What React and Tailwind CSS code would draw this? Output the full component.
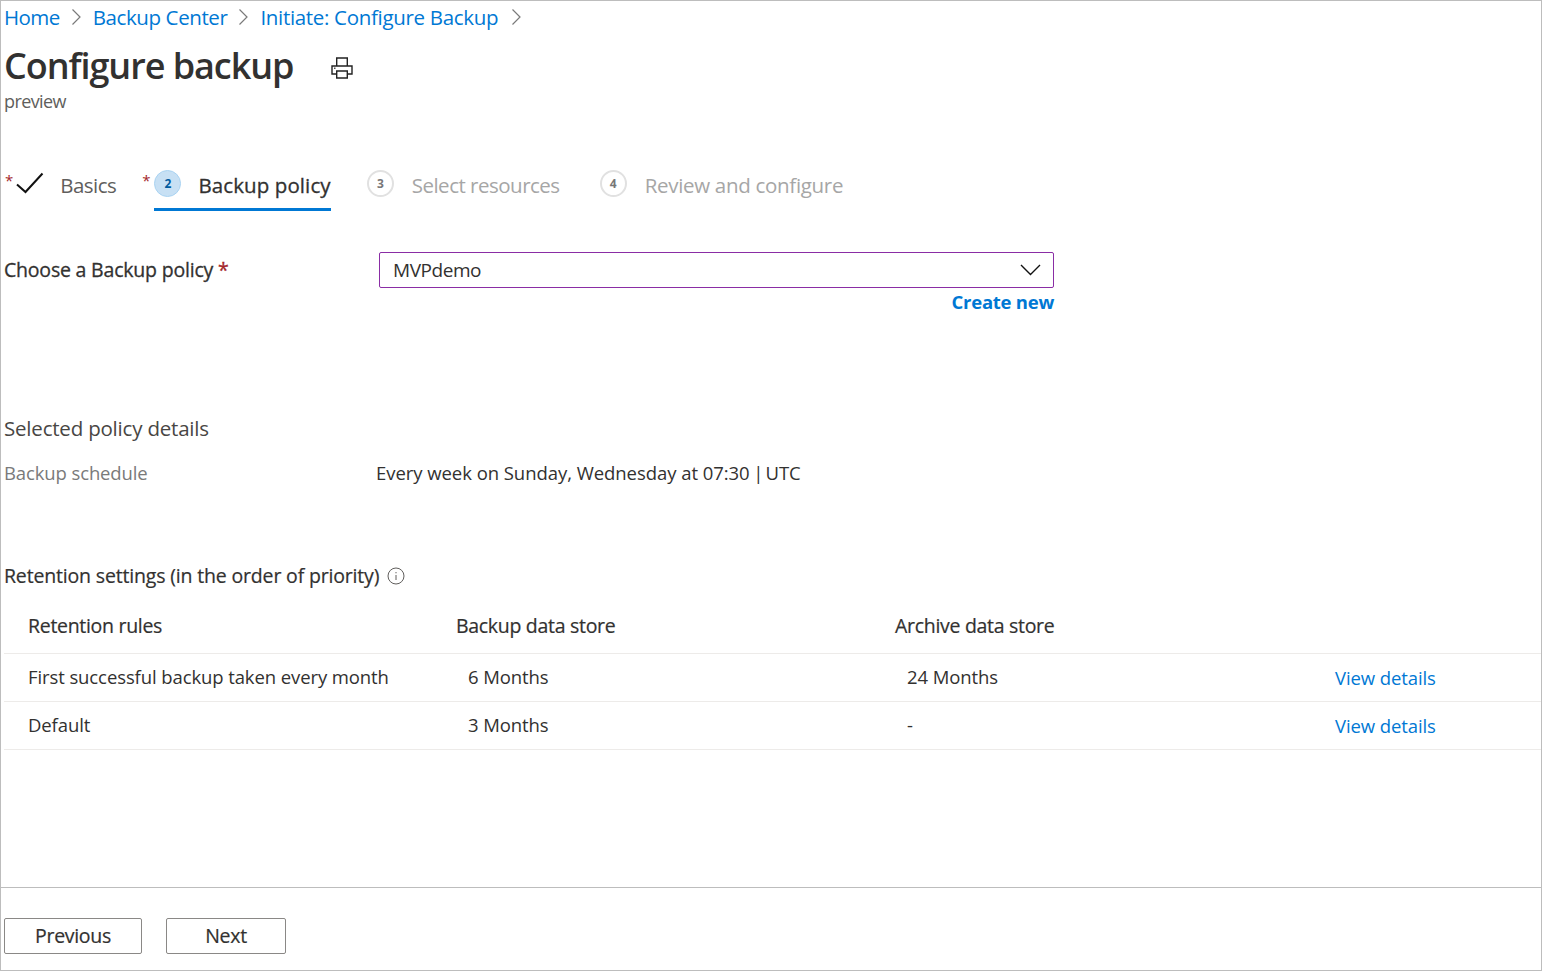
import { Fragment } from 'react';

const FONT = "font-['Open_Sans','Noto_Sans',sans-serif]";

const Chevron = () => (
  <svg width="10" height="18" viewBox="0 0 10 18" fill="none" stroke="#7a7a7a" strokeWidth="1.2">
    <path d="M1.5 1.5 9 9l-7.5 7.5" />
  </svg>
);

const crumbs = [
  { label: 'Home', className: 'tracking-[-0.55px]' },
  { label: 'Backup Center', className: 'tracking-[-0.4px]' },
  { label: 'Initiate: Configure Backup', className: 'tracking-[-0.32px] mr-[2px]' },
];

const rows = [
  { rule: 'First successful backup taken every month', backup: '6 Months', archive: '24 Months' },
  { rule: 'Default', backup: '3 Months', archive: '-' },
];

const Star = ({ className = '' }) => (
  <span className={`text-[#a4262c] text-[15px] leading-none ${className}`}>*</span>
);

const Step = ({ n, label, className }) => (
  <div className={`flex items-start ${className}`}>
    <div className="w-[27px] h-[27px] rounded-full border-2 border-[#e1e1e1] flex items-center justify-center text-[12px] font-bold text-[#777] mt-[1px]">
      {n}
    </div>
    <div className="ml-[18px] text-[20.5px] leading-[30px] text-[#a6a6a6] mt-[1px]">{label}</div>
  </div>
);

const App = () => {
  return (
    <div className={`${FONT} w-[1542px] h-[971px] bg-white border border-[#bdbdbd] flex flex-col overflow-hidden text-[#323130]`}>
      <div className="h-[33px] pl-[3px] flex items-center gap-[11px] text-[20.5px] text-[#0078d4]">
        {crumbs.map((c) => (
          <Fragment key={c.label}>
            <span className={c.className}>{c.label}</span>
            <span className="mr-[1px] -mt-[2px]"><Chevron /></span>
          </Fragment>
        ))}
      </div>

      <div className="h-[53px] pl-[3px] pt-[14px] flex items-start">
        <h1 className="text-[36px] font-semibold tracking-[-1.05px] leading-[36px]">Configure backup</h1>
        <svg className="ml-[38px] mt-[9px]" width="22" height="22" viewBox="0 0 22 22" fill="none" stroke="#222" strokeWidth="1.4">
          <path d="M5.7 9V1h10.6v8M5.7 17H1v-8h20v8h-4.7" />
          <path d="M5.7 14h10.6v7H5.7z" />
          <path d="M3.2 11.3h1.2" />
        </svg>
      </div>

      <div className="h-[32px] pl-[3px] text-[18px] tracking-[-0.6px] leading-[28px] text-[#605e5c]">preview</div>

      <div className="h-[68px] mt-[34px] pl-[4px] flex items-start pt-[16px]">
        <Star className="mt-[4px]" />
        <svg className="mt-[3px] ml-[3px]" width="28" height="22" viewBox="0 0 28 22" fill="none" stroke="#111" strokeWidth="2">
          <path d="M1 12.5 9.5 20 26.5 1.5" />
        </svg>
        <div className="ml-[16px] text-[20.5px] leading-[30px] tracking-[-0.55px] text-[#605e5c] mt-[1px]">Basics</div>
        <Star className="ml-[26px] mt-[4px]" />
        <div className="ml-[4px] h-[42px] flex items-start border-b-[3px] border-[#0078d4]">
          <div className="w-[27px] h-[27px] rounded-full bg-[#c7e0f4] border border-[#a9d3f2] flex items-center justify-center text-[12px] font-bold text-[#005a9e] mt-[1px]">
            2
          </div>
          <div className="ml-[17px] text-[20.5px] leading-[30px] tracking-[0.1px] [-webkit-text-stroke:0.3px] text-[#323130] mt-[1px]">Backup policy</div>
        </div>
        <Step n="3" label="Select resources" className="ml-[36px] tracking-[-0.5px]" />
        <Step n="4" label="Review and configure" className="ml-[40px] tracking-[-0.3px]" />
      </div>

      <div className="mt-[31px] pl-[3px] flex items-start">
        <div className="w-[375px] h-[36px] flex items-center text-[19.5px] tracking-[-0.2px] [-webkit-text-stroke:0.3px]">
          Choose a Backup policy <span className="text-[#a4262c] ml-[5px]">*</span>
        </div>
        <div className="w-[675px]">
          <div className="h-[36px] border border-[#8a2da5] rounded-[2px] flex items-center justify-between pl-[13px] pr-[12px] text-[19px] tracking-[-0.45px]">
            <span>MVPdemo</span>
            <svg width="21" height="12" viewBox="0 0 21 12" fill="none" stroke="#111" strokeWidth="1.4">
              <path d="M1 1l9.5 9.5L20 1" />
            </svg>
          </div>
          <div className="text-right text-[18.5px] tracking-[-0.25px] font-bold text-[#0078d4] leading-[28px]">Create new</div>
        </div>
      </div>

      <div className="mt-[96px] pl-[3px] text-[20.5px] tracking-[-0.2px] leading-[32px] text-[#484644]">Selected policy details</div>

      <div className="mt-[13px] pl-[3px] flex items-center h-[32px] text-[18.5px] tracking-[-0.05px]">
        <div className="w-[372px] text-[#7a7a7a] tracking-[-0.12px]">Backup schedule</div>
        <div>Every week on Sunday, Wednesday at 07:30<span className="tracking-[-1.3px]"> | </span>UTC</div>
      </div>

      <div className="mt-[71px] pl-[3px] flex items-center h-[32px] text-[19.5px] tracking-[-0.17px] [-webkit-text-stroke:0.2px]">
        Retention settings (in the order of priority)
        <svg className="ml-[8px]" width="18" height="18" viewBox="0 0 18 18" fill="none" stroke="#605e5c" strokeWidth="1">
          <circle cx="9" cy="9" r="8" />
          <path d="M9 8v5M9 5v1.3" />
        </svg>
      </div>

      <div className="mt-[4px] ml-[3px] text-[18.5px] tracking-[-0.1px]">
        <div className="h-[58px] pt-[2px] flex items-center border-b border-[#edebe9] [-webkit-text-stroke:0.2px] text-[19.5px] tracking-[-0.3px]">
          <div className="w-[452px] pl-[24px]">Retention rules</div>
          <div className="w-[439px]">Backup data store</div>
          <div>Archive data store</div>
        </div>
        {rows.map((r) => (
          <div key={r.rule} className="h-[48px] pb-[2px] flex items-center border-b border-[#edebe9]">
            <div className="w-[452px] pl-[24px]">{r.rule}</div>
            <div className="w-[439px] pl-[12px]">{r.backup}</div>
            <div className="w-[428px] pl-[12px]">{r.archive}</div>
            <div className="text-[#0078d4] ml-[12px] mt-[2px]">View details</div>
          </div>
        ))}
      </div>

      <div className="mt-auto h-[83px] border-t border-[#bdbdbd] pl-[3px] pt-[30px] flex items-start gap-[24px] text-[19.5px] tracking-[-0.3px] [-webkit-text-stroke:0.2px]">
        <button className="w-[138px] h-[36px] border border-[#8a8886] rounded-[2px]">Previous</button>
        <button className="w-[120px] h-[36px] border border-[#8a8886] rounded-[2px]">Next</button>
      </div>
    </div>
  );
};

export default App;
